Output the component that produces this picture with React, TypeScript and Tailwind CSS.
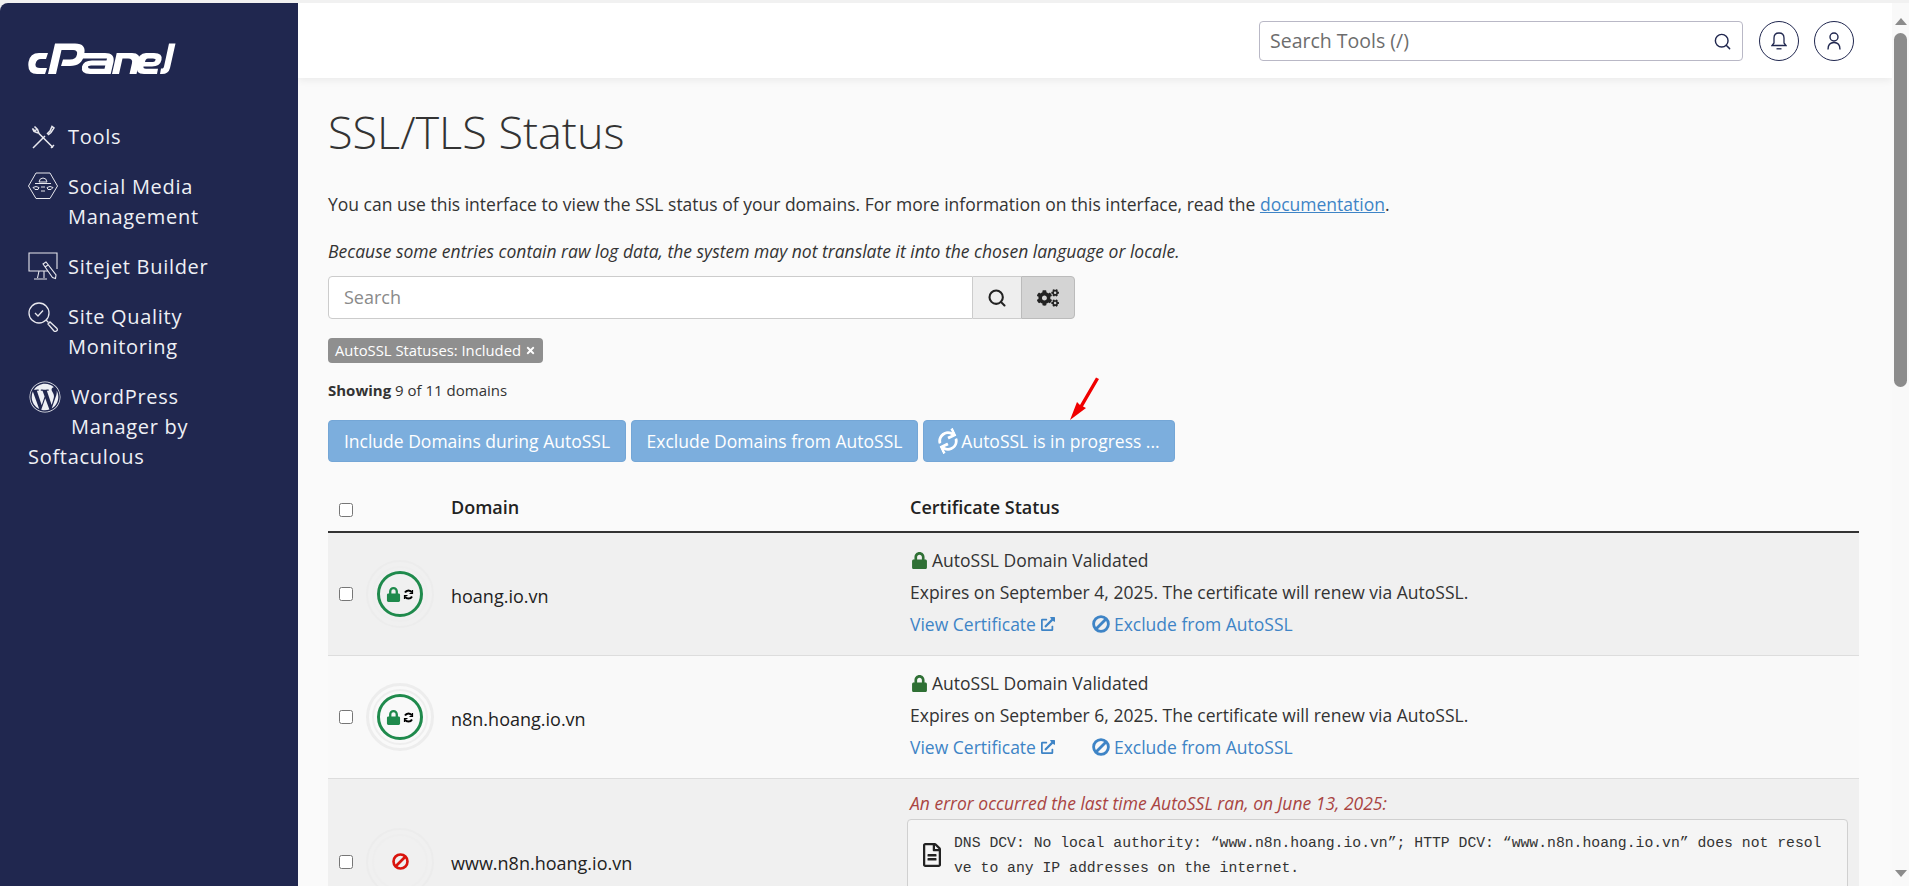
import { FaCogs, FaExternalLinkAlt, FaLock, FaRegFileAlt, FaSync, FaTimes, FaWordpress } from "react-icons/fa";
import { Search } from "lucide-react";

function CpanelLogo() {
  return (
    <svg width="148" height="31" viewBox="0 0 148 31" fill="white" stroke="none">
      <path d="M20 10H11Q2 10 0.500 19Q-1 31 9 31H17L19 25H12Q7 25 7.500 21Q8.500 16 13 16H18Z" />
      <path d="M20 31L27 0.500H47Q59 0.500 56 12Q54 23 42 23H33L35 16.500H42Q48 16.500 49 11.500Q50 7 45 7H33.500L28 31Z" />
      <path d="M54 10H77Q87 10 85.500 19L82.700 31H62Q52.500 31 54 23.500Q55.500 17.500 64 17.500H78.500L79 15.500H53Z M63 22.500Q60 22.500 60 24Q60 25.700 62.500 25.700H76.500L77.300 22.500Z" fillRule="evenodd" />
      <path d="M84 31L88.700 10H104Q113 10 111.500 18.500L108.500 31H101.500L104 20Q105 15.500 100 15.500H94.500L91 31Z" />
      <path d="M118 10H126Q135 10 133.500 17Q132 23.500 124 23.500H115.500Q115 25.700 118 25.700H130L129 31H116Q107 31 108.500 21Q110.500 10 118 10Z M117 19H125Q127 19 127.500 17Q128 15.500 125 15.500H120Q117.500 15.500 117 19Z" fillRule="evenodd" />
      <path d="M141 0.500H147.500L142 25Q140.500 31 134 31H132L133 25.500H134.500Q135.500 25.500 136 23.500Z" />
    </svg>
  );
}

function ToolsIcon() {
  return (
    <svg width="24" height="24" viewBox="0 0 24 24" fill="none" stroke="#e8e8ee" strokeWidth="1.500" className="mt-[3px] ml-[3px]">
      <path d="M2 23L14 11M16 9L19 6L21 1.500L23 3L20 7.500L17 10" />
      <path d="M22 22.500L8 8.500L6.500 4.500L3.500 1.500L6 4L4 6L1.500 3.500L3 6.500L7 8" />
      <path d="M23 20L20 23" />
    </svg>
  );
}

function SocialIcon() {
  return (
    <svg width="30" height="28" viewBox="0 0 30 28" fill="none" stroke="#e8e8ee" strokeWidth="1">
      <path d="M8 1H22L29.500 14L22 26.500H8L0.500 14Z" />
      <path d="M11 10Q11.500 6 15 6Q18.500 6 19 10Z" />
      <path d="M7 11.500H23M5 15.500Q8 13.500 11 15.500L10 17.500H7ZM25 15.500Q22 13.500 19 15.500L20 17.500H23ZM13 15H17M13 19H17" />
    </svg>
  );
}

function SitejetIcon() {
  return (
    <svg width="30" height="29" viewBox="0 0 30 29" fill="none" stroke="#e8e8ee" strokeWidth="1.100">
      <path d="M20 19H1V1H29V17" />
      <path d="M11 19L9.500 26M16 19V26M6 27H19" />
      <path d="M15 12L18 10L28 23L27.500 26.500L24.500 25.500Z" />
      <path d="M17 15L20 13" />
    </svg>
  );
}

function QualityIcon() {
  return (
    <svg width="30" height="30" viewBox="0 0 30 30" fill="none" stroke="#e8e8ee" strokeWidth="1.300">
      <circle cx="11" cy="11" r="10" />
      <path d="M7 11L10 14L15 8.500" />
      <path d="M18 18L20.500 20.500" />
      <path d="M20 22L22 20L29 26.500Q30 28 28.500 29Q27 30 26 29Z" />
    </svg>
  );
}

function BanIcon({ size, color }: { size: number; color: string }) {
  return (
    <svg width={size} height={size} viewBox="0 0 18 18" fill="none" stroke={color} strokeWidth="2.800" className="shrink-0">
      <circle cx="9" cy="9" r="7.400" />
      <path d="M14 4L4 14" />
    </svg>
  );
}

function NavItem({ icon, children }: { icon: React.ReactNode; children: React.ReactNode }) {
  return (
    <div className="flex">
      <div className="w-[40px] shrink-0">{icon}</div>
      <div>{children}</div>
    </div>
  );
}

function Sidebar() {
  return (
    <aside className="w-[298px] shrink-0 rounded-tl-lg bg-[#20274f] px-[28px] pt-[40px] text-[20px] leading-[30px] tracking-[0.7px] text-[#eef0f5]">
      <CpanelLogo />
      <div className="mt-[48px] flex flex-col gap-[20px]">
        <NavItem icon={<ToolsIcon />}>Tools</NavItem>
        <NavItem icon={<SocialIcon />}>
          Social Media
          <br />
          Management
        </NavItem>
        <NavItem icon={<SitejetIcon />}>Sitejet Builder</NavItem>
        <NavItem icon={<QualityIcon />}>
          Site Quality
          <br />
          Monitoring
        </NavItem>
        <div>
          <div className="float-left mt-[-1px] ml-[1px] w-[42px] text-[32px]">
            <FaWordpress />
          </div>
          WordPress
          <br />
          Manager by
          <br />
          Softaculous
        </div>
      </div>
    </aside>
  );
}

function TopBar() {
  return (
    <header className="flex h-[75px] shrink-0 items-start justify-end bg-white pt-[18px] pr-[38px] shadow-[0_2px_8px_rgba(0,0,0,0.07)]">
      <div className="flex h-[40px] w-[484px] items-center justify-between rounded border border-[#b9b8c6] px-[10px] text-[19.500px] text-[#6d6d6d]">
        <span>Search Tools (/)</span>
        <Search size={19} className="text-[#20274f]" strokeWidth={1.8} />
      </div>
      <div className="ml-[16px] flex h-[40px] w-[40px] items-center justify-center rounded-full border border-[#20274f]">
        <svg width="16" height="18" viewBox="0 0 16 18" fill="none" stroke="#20274f" strokeWidth="1.300">
          <path d="M1 13.500H15L13 11V6Q13 1 8 1Q3 1 3 6V11Z" />
          <path d="M5.500 16.800H10.500" />
        </svg>
      </div>
      <div className="ml-[15px] flex h-[40px] w-[40px] items-center justify-center rounded-full border border-[#20274f]">
        <svg width="14" height="18" viewBox="0 0 14 18" fill="none" stroke="#20274f" strokeWidth="1.400">
          <circle cx="7" cy="5" r="4" />
          <path d="M1 17.500Q1 10.500 7 10.500Q13 10.500 13 17.500" />
        </svg>
      </div>
    </header>
  );
}

function StatusIcon({ ok, strong }: { ok: boolean; strong?: boolean }) {
  const outer = strong ? "border-[3px] border-[#ededed]" : "border-2 border-[#ececec]";
  return (
    <div className={`flex h-[68px] w-[68px] items-center justify-center rounded-full ${outer}`}>
      <div className="flex h-[56px] w-[56px] items-center justify-center rounded-full border-2 border-[#eeeeee]">
        {ok ? (
          <div className="flex h-[46px] w-[46px] items-center justify-center gap-[2px] rounded-full border-[3px] border-[#1f8a4c]">
            <FaLock className="text-[15px] text-[#1f8a4c]" />
            <svg width="11" height="11" viewBox="0 0 11 11" fill="none" stroke="black" strokeWidth="2">
              <path d="M2 3.500A4 4 0 0 1 9 3.500M9 7.500A4 4 0 0 1 2 7.500" />
              <path d="M9.500 1V4.500H6.500M1.500 10V6.500H4.500" strokeWidth="1.200" />
            </svg>
          </div>
        ) : (
          <BanIcon size={17} color="#d9140d" />
        )}
      </div>
    </div>
  );
}

function Row({ domain, ok, date, strong, shaded }: { domain: string; ok: boolean; date?: string; strong?: boolean; shaded?: boolean }) {
  return (
    <div className={`grid grid-cols-[123px_459px_1fr] border-b border-[#dddddd] ${shaded ? "bg-[#f0f0f0]" : "bg-[#f9f9f9]"} ${ok ? "h-[123px]" : "h-[166px]"}`}>
      <div className="flex items-center pl-[11px]">
        <input type="checkbox" readOnly className="h-[14px] w-[14px] shrink-0" />
        <div className="ml-[13px] shrink-0">
          <StatusIcon ok={ok} strong={strong} />
        </div>
      </div>
      <div className="flex items-center pt-[4px] text-[18px] text-[#222222]">{domain}</div>
      {ok ? (
        <div className="pt-[11px] text-[17.500px] leading-[32px] text-[#333333]">
          <div className="flex items-center">
            <FaLock className="mr-[4px] ml-[1px] text-[17px] text-[#2f7035]" />
            AutoSSL Domain Validated
          </div>
          <div>Expires on {date}. The certificate will renew via AutoSSL.</div>
          <div className="flex items-center text-[#3e84c6]">
            View Certificate
            <FaExternalLinkAlt className="ml-[5px] text-[14px]" />
            <span className="mr-[4px] ml-[37px]">
              <BanIcon size={18} color="#3e84c6" />
            </span>
            Exclude from AutoSSL
          </div>
        </div>
      ) : (
        <div className="pt-[12px] pr-[11px] text-[17.500px]">
          <div className="leading-[24px] text-[#a94442] italic">An error occurred the last time AutoSSL ran, on June 13, 2025:</div>
          <div className="mt-[4px] ml-[-3px] flex items-start rounded border border-[#d0d0d0] bg-[#f5f5f5] pt-[11px] pr-[20px] pb-[20px] pl-[12px]">
            <FaRegFileAlt className="mt-[12px] mr-[10px] shrink-0 text-[24px] text-[#222222]" />
            <div className="font-['Liberation_Mono',monospace] text-[14.760px] leading-[25px] break-all text-[#333333]">
              DNS DCV: No local authority: “www.n8n.hoang.io.vn”; HTTP DCV: “www.n8n.hoang.io.vn” does not resolve to any IP addresses on the internet.
            </div>
          </div>
        </div>
      )}
    </div>
  );
}

function Content() {
  return (
    <main className="relative flex-1 overflow-hidden pt-[26px] pr-[33px] pl-[30px] text-[#333333]">
      <h1 className="text-[45px] leading-[56px] font-light text-[#333333]">SSL/TLS Status</h1>
      <p className="mt-[32px] text-[17.500px] leading-[24px]">
        You can use this interface to view the SSL status of your domains. For more information on this interface, read the{" "}
        <span className="text-[#3e84c6] underline">documentation</span>.
      </p>
      <p className="mt-[23px] text-[17.500px] leading-[24px] italic">
        Because some entries contain raw log data, the system may not translate it into the chosen language or locale.
      </p>
      <div className="mt-[13px] flex h-[43px] w-[747px]">
        <div className="flex flex-1 items-center rounded-l border border-[#cccccc] bg-white px-[15px] text-[18px] text-[#8a8a8a]">Search</div>
        <div className="flex w-[48px] items-center justify-center border-y border-[#cccccc] bg-[#eeeeee] text-[#222222]">
          <Search size={20} strokeWidth={2.500} />
        </div>
        <div className="flex w-[54px] items-center justify-center rounded-r border border-[#bbbbbb] bg-[#d4d4d4] text-[22px] text-[#222222]">
          <FaCogs />
        </div>
      </div>
      <div className="mt-[19px] flex h-[25px] w-[215px] items-center justify-center gap-[4px] rounded bg-[#8f8f8f] text-[14.800px] text-white">
        AutoSSL Statuses: Included
        <FaTimes className="text-[11px]" />
      </div>
      <p className="mt-[17px] text-[15px] leading-[20px]">
        <b>Showing</b> 9 of 11 domains
      </p>
      <div className="mt-[20px] flex h-[42px] gap-[5px] text-[17.500px] text-white">
        <div className="flex w-[298px] items-center justify-center rounded-sm border border-[#74a6d6] bg-[#7caedd]">Include Domains during AutoSSL</div>
        <div className="flex w-[287px] items-center justify-center rounded-sm border border-[#74a6d6] bg-[#7caedd]">Exclude Domains from AutoSSL</div>
        <div className="flex w-[252px] items-center justify-center gap-[3px] rounded-sm border border-[#74a6d6] bg-[#7caedd]">
          <FaSync className="rotate-[-25deg] text-[20px]" />
          AutoSSL is in progress ...
        </div>
      </div>
      <div className="absolute top-[299px] left-[772px]">
        <svg width="30" height="44" viewBox="0 0 30 44" fill="#f00000">
          <path d="M0 43L7 25L10 28L26 0.500L29 2L13 29.500L16 31Z" />
        </svg>
      </div>
      <div className="mt-[33px] grid h-[38px] grid-cols-[123px_459px_1fr] border-b-2 border-[#333333] text-[18px] font-semibold text-[#222222]">
        <div className="pl-[11px] pt-[2px]">
          <input type="checkbox" readOnly className="h-[14px] w-[14px]" />
        </div>
        <div className="leading-[24px]">Domain</div>
        <div className="leading-[24px]">Certificate Status</div>
      </div>
      <Row domain="hoang.io.vn" ok shaded date="September 4, 2025" />
      <Row domain="n8n.hoang.io.vn" ok strong date="September 6, 2025" />
      <Row domain="www.n8n.hoang.io.vn" ok={false} shaded />
    </main>
  );
}

function Scrollbar() {
  return (
    <div className="flex w-[17px] shrink-0 flex-col items-center bg-[#f9f9f9] pt-[15px]">
      <div className="h-0 w-0 border-x-[6px] border-b-[7px] border-x-transparent border-b-[#8c8c8c]" />
      <div className="mt-[8px] h-[354px] w-[13px] rounded-full bg-[#8c8c8c]" />
      <div className="mt-[483px] h-0 w-0 border-x-[6px] border-t-[7px] border-x-transparent border-t-[#8c8c8c]" />
    </div>
  );
}

export default function App() {
  return (
    <div className="h-[886px] overflow-hidden bg-[#f1f1f1] pt-[3px] font-['Open_Sans',sans-serif]">
      <div className="flex h-[883px]">
        <Sidebar />
        <div className="flex min-w-0 flex-1 flex-col overflow-hidden bg-[#fafafa]">
          <TopBar />
          <Content />
        </div>
        <Scrollbar />
      </div>
    </div>
  );
}
